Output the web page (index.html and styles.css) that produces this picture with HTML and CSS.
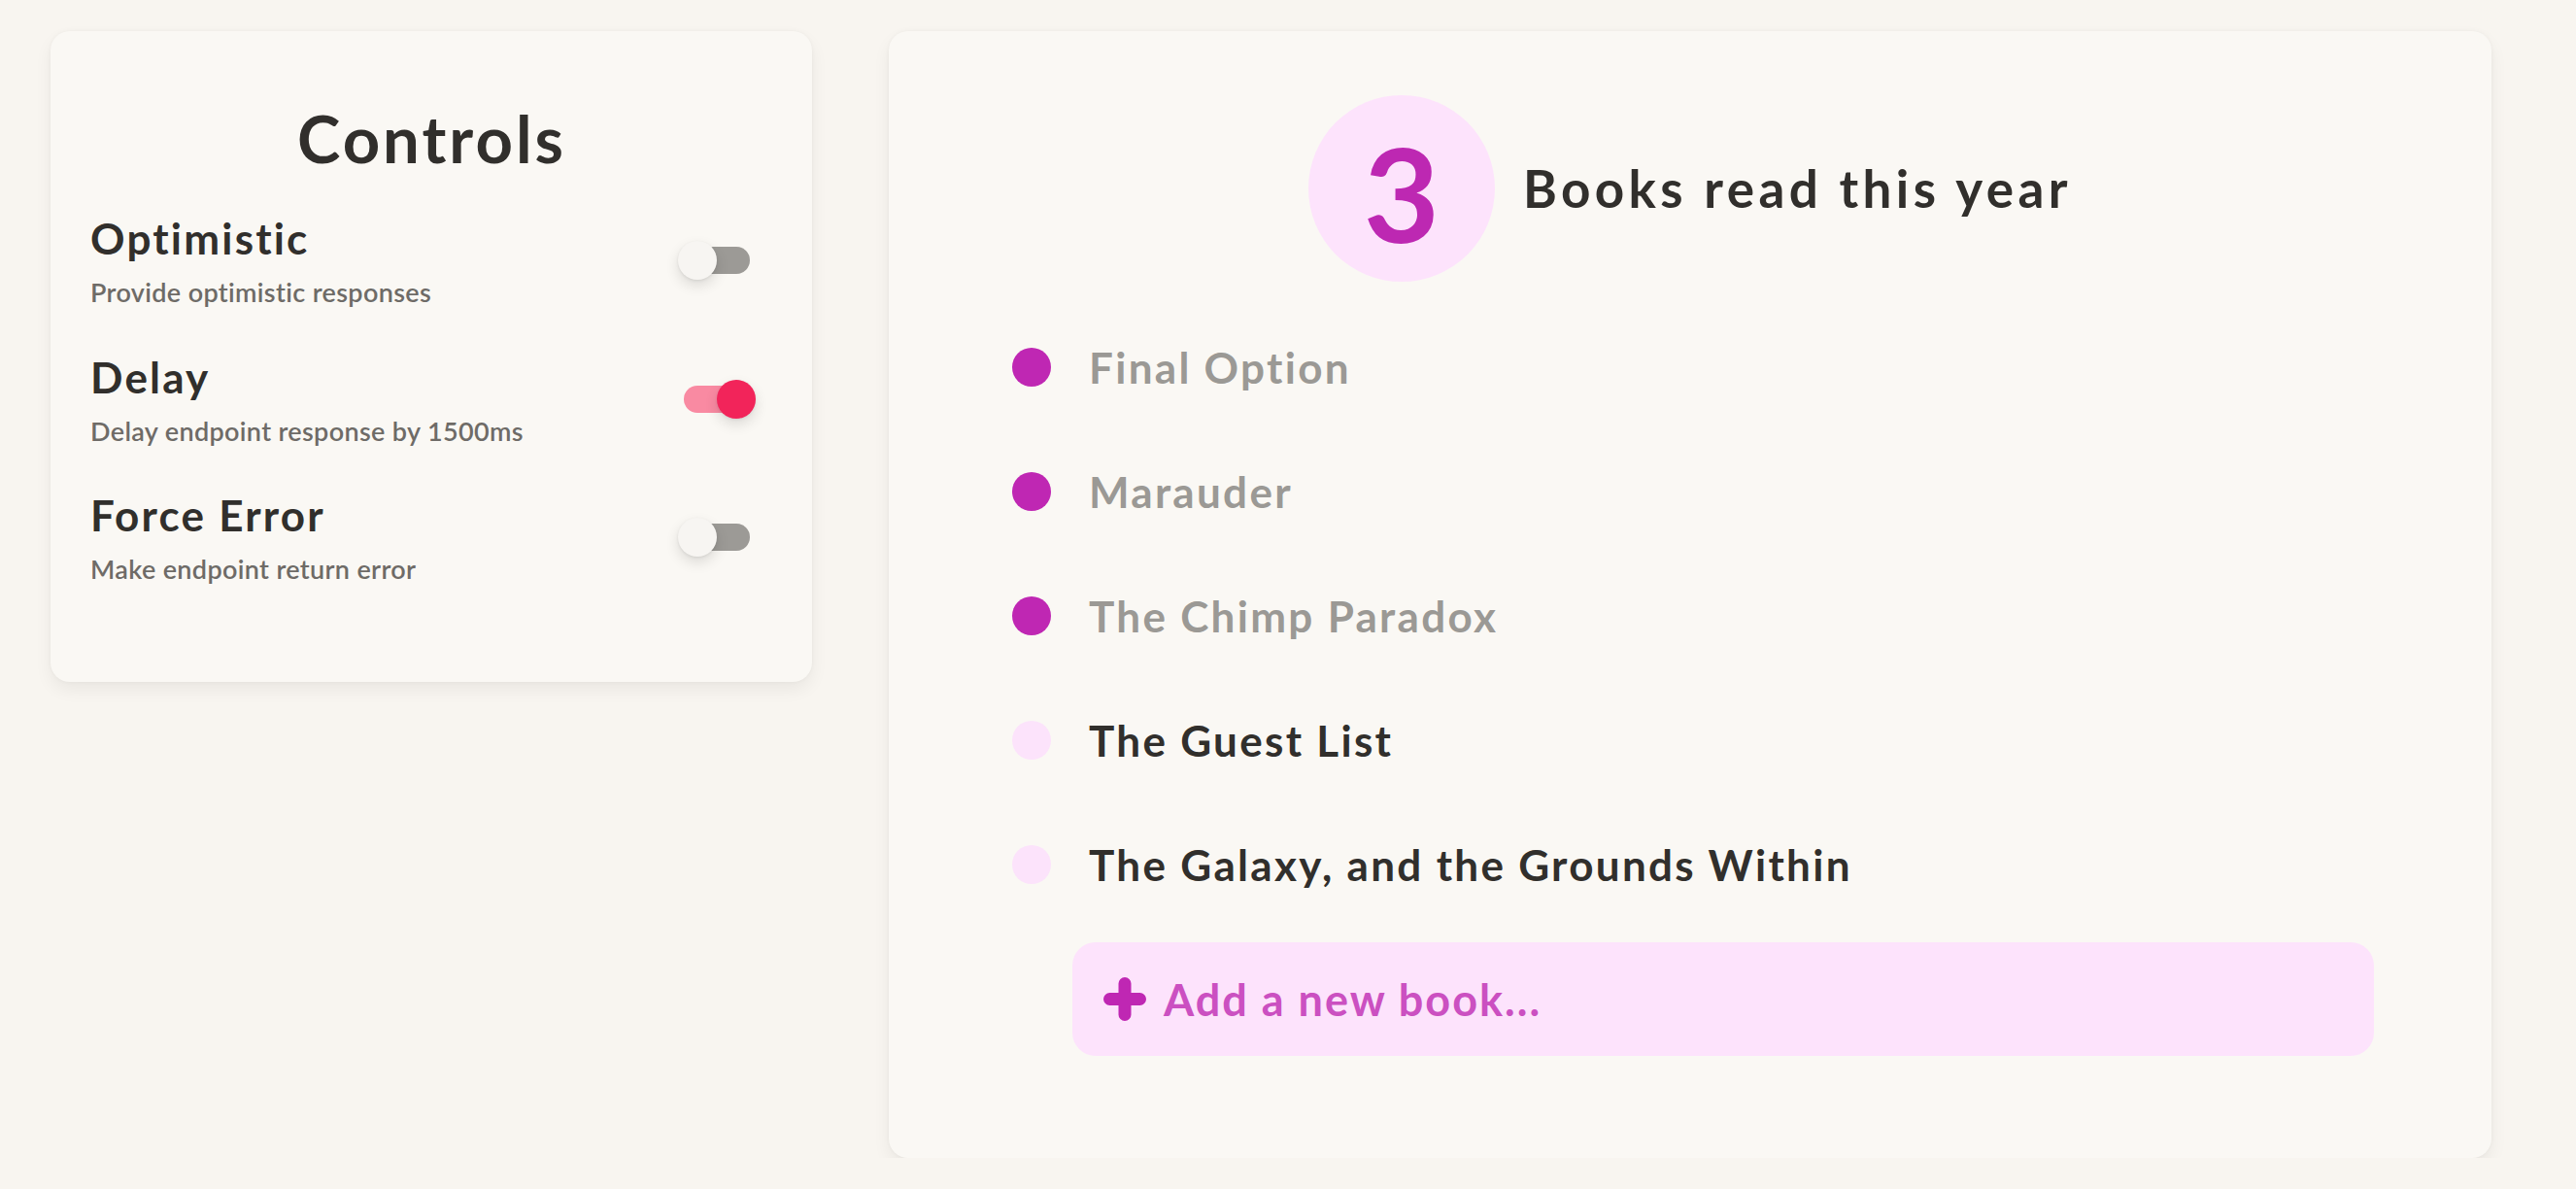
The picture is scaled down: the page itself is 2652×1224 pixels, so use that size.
FILE: index.html
```html
<!DOCTYPE html>
<html lang="en">
<head>
<meta charset="utf-8">
<title>Books</title>
<link rel="stylesheet" href="styles.css">
</head>
<body>
<main class="page">
  <section class="card controls">
    <h1 class="controls-title">Controls</h1>
    <div class="control-row">
      <div class="control-text">
        <div class="control-label">Optimistic</div>
        <div class="control-desc">Provide optimistic responses</div>
      </div>
      <span class="switch"><span class="switch-track"></span><span class="switch-knob"></span></span>
    </div>
    <div class="control-row">
      <div class="control-text">
        <div class="control-label">Delay</div>
        <div class="control-desc">Delay endpoint response by 1500ms</div>
      </div>
      <span class="switch is-on"><span class="switch-track"></span><span class="switch-knob"></span></span>
    </div>
    <div class="control-row">
      <div class="control-text">
        <div class="control-label">Force Error</div>
        <div class="control-desc">Make endpoint return error</div>
      </div>
      <span class="switch"><span class="switch-track"></span><span class="switch-knob"></span></span>
    </div>
  </section>

  <section class="card books">
    <header class="books-header">
      <div class="count-circle"><span class="count">3</span></div>
      <h2 class="books-title">Books read this year</h2>
    </header>
    <ul class="book-list">
      <li class="book is-done"><span class="dot"></span><span class="book-name">Final Option</span></li>
      <li class="book is-done"><span class="dot"></span><span class="book-name">Marauder</span></li>
      <li class="book is-done"><span class="dot"></span><span class="book-name">The Chimp Paradox</span></li>
      <li class="book"><span class="dot"></span><span class="book-name">The Guest List</span></li>
      <li class="book"><span class="dot"></span><span class="book-name">The Galaxy, and the Grounds Within</span></li>
    </ul>
    <div class="add-book">
      <svg class="plus" width="44" height="45" viewBox="0 0 44 45" aria-hidden="true">
        <path d="M22 6.5 V38.5 M6.5 22.5 H37.5" stroke="#bf27b3" stroke-width="13" stroke-linecap="round" fill="none"/>
      </svg>
      <span class="add-text">Add a new book...</span>
    </div>
  </section>
</main>
</body>
</html>
```

FILE: styles.css
```css
* { box-sizing: border-box; }

html, body {
  margin: 0;
  padding: 0;
  background: #f8f5f0;
}

body {
  font-family: "Lato", "Noto Sans", sans-serif;
  color: #312f2c;
}

.page {
  display: flex;
  align-items: flex-start;
  gap: 79px;
  padding: 32px 0 0 52px;
}

.card {
  background: #faf8f4;
  border-radius: 20px;
  box-shadow: 0 8px 18px rgba(0, 0, 0, 0.06), 0 0 4px rgba(0, 0, 0, 0.04);
}

/* Controls card */
.controls {
  width: 784px;
  padding: 70px 40px 99px 41px;
}

.controls-title {
  margin: 0 0 36px;
  font-size: 67px;
  line-height: 80px;
  font-weight: 700;
  letter-spacing: 3px;
  text-align: center;
  color: #312f2c;
}

.control-row {
  display: flex;
  align-items: center;
  justify-content: space-between;
  height: 100px;
}

.control-row + .control-row {
  margin-top: 42.5px;
}

.control-label {
  font-size: 44px;
  line-height: 54px;
  font-weight: 700;
  letter-spacing: 2.2px;
  color: #312f2c;
}

.control-desc {
  margin-top: 12px;
  font-size: 27px;
  line-height: 34px;
  font-weight: 600;
  letter-spacing: 0.35px;
  color: #6e6b67;
}

.switch {
  position: relative;
  display: block;
  width: 68px;
  height: 28px;
  margin-right: 24px;
  flex: none;
}

.switch-track {
  display: block;
  width: 100%;
  height: 100%;
  border-radius: 14px;
  background: #9c9a96;
}

.switch-knob {
  position: absolute;
  top: -6px;
  left: -6px;
  width: 40px;
  height: 40px;
  border-radius: 50%;
  background: #f7f5f2;
  box-shadow: 0 6px 14px rgba(0, 0, 0, 0.12), 0 1px 3px rgba(0, 0, 0, 0.08);
}

.switch.is-on .switch-track {
  background: #f98aa2;
}

.switch.is-on .switch-knob {
  left: 34px;
  background: #f2245a;
}

/* Books card */
.books {
  width: 1650px;
  padding: 66px 121px 105px 127px;
}

.books-header {
  display: flex;
  align-items: center;
  justify-content: center;
  gap: 29px;
  margin-left: -6px;
}

.count-circle {
  width: 192px;
  height: 192px;
  border-radius: 50%;
  background: #fde3fc;
  display: flex;
  align-items: center;
  justify-content: center;
  flex: none;
}

.count {
  font-size: 135px;
  line-height: 1;
  font-weight: 700;
  color: #bd28b2;
  padding-top: 8px;
}

.books-title {
  margin: 0;
  font-size: 53px;
  line-height: 64px;
  font-weight: 700;
  letter-spacing: 4.4px;
  color: #312f2c;
}

.book-list {
  list-style: none;
  margin: 24px 0 16px;
  padding: 0;
}

.book {
  display: flex;
  align-items: center;
  gap: 39px;
  padding: 37px 0;
}

.dot {
  width: 40px;
  height: 40px;
  border-radius: 50%;
  background: #fce3fb;
  flex: none;
}

.book.is-done .dot {
  background: #bf27b3;
}

.book-name {
  font-size: 44px;
  line-height: 54px;
  font-weight: 700;
  letter-spacing: 2.3px;
  color: #312f2c;
}

.book.is-done .book-name {
  color: #9b9995;
}

.add-book {
  display: flex;
  align-items: center;
  gap: 18px;
  height: 117px;
  margin-left: 62px;
  padding-left: 32px;
  border-radius: 24px;
  background: #fde3fc;
}

.plus {
  display: block;
  flex: none;
}

.add-text {
  font-size: 45px;
  line-height: 54px;
  font-weight: 700;
  letter-spacing: 2px;
  color: #cb50c1;
}
```
